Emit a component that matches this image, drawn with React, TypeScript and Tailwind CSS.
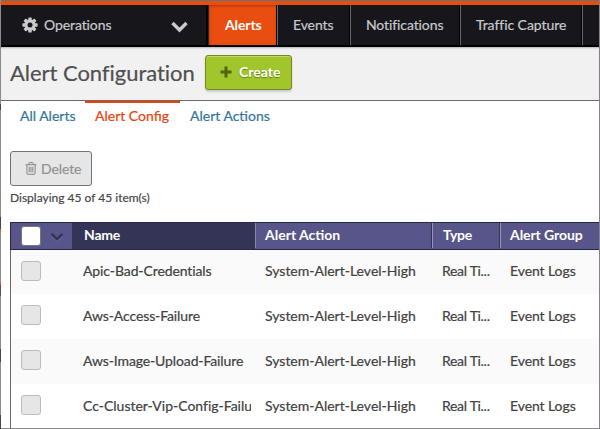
import React from "react";

const nav = [
  { label: "Events", cell: "w-[73px] pl-[15px]", text: "tracking-[-0.1px]" },
  { label: "Notifications", cell: "w-[110px] pl-[15px]", text: "tracking-[-0.1px]" },
  { label: "Traffic Capture", cell: "w-[122px] pl-[15px]", text: "tracking-[-0.05px]" },
];

const rows = [
  { name: "Apic-Bad-Credentials", height: "h-[44px] pb-[2px]", text: "tracking-[-0.1px]", shift: "" },
  { name: "Aws-Access-Failure", height: "h-[45px] pb-[3px]", text: "tracking-[-0.11px]", shift: "pt-[2px]" },
  { name: "Aws-Image-Upload-Failure", height: "h-[45px] pb-[3px]", text: "tracking-[-0.12px]", shift: "pt-[2px]" },
  { name: "Cc-Cluster-Vip-Config-Failure", height: "h-[44px] pb-[2px]", text: "tracking-[-0.01px]", shift: "pt-[2px]" },
];

function Gear() {
  return (
    <svg width="16" height="16" viewBox="0 0 16 16" fill="#c9c9ce">
      {[0, 45, 90, 135].map((a) => (
        <rect key={a} x="6.3" y="0.4" width="3.4" height="15.2" rx="0.6" transform={`rotate(${a} 8 8)`} />
      ))}
      <circle cx="8" cy="8" r="5.7" />
      <circle cx="8" cy="8" r="2.5" fill="#17171b" />
    </svg>
  );
}

function Trash() {
  return (
    <svg width="12" height="13" viewBox="0 0 12 13" fill="none" stroke="#858585" strokeWidth="1">
      <path d="M0.5 2.7H11.5M3.8 2.5V1.3Q3.8 .6 4.5 .6H7.5Q8.2 .6 8.2 1.3V2.5M1.9 3V11.3Q1.9 12.3 2.9 12.3H9.1Q10.1 12.3 10.1 11.3V3M4.2 4.8V10.3M6 4.8V10.3M7.8 4.8V10.3" />
    </svg>
  );
}

export default function App() {
  return (
    <div className="flex h-[429px] w-[600px] overflow-hidden bg-white font-['Lato',sans-serif] text-[14px] leading-[20px] whitespace-nowrap text-[#414141] [-webkit-text-stroke:0.2px]">
      <div className="flex w-px shrink-0 flex-col bg-[#8c8c8e]">
        <div className="h-[104px]" />
        <div className="h-[6px] bg-[#474747]" />
        <div className="h-[107px]" />
        <div className="h-[12px] bg-[#484650]" />
        <div className="h-[3px] bg-[#e8581c]" />
        <div className="h-[50px]" />
        <div className="h-[3px] bg-[#e8581c]" />
        <div className="h-[11px] bg-[#55535f]" />
        <div className="h-[53px]" />
        <div className="h-[13px] bg-[#484650]" />
        <div className="h-[53px]" />
        <div className="grow bg-[#484650]" />
      </div>
      <div className="flex w-[598px] flex-col border-t border-b border-t-[#66727c] border-b-[#858385]">
        <div className="h-[4px] shrink-0 bg-[#e94e0f]" />
        <nav className="flex h-[42px] shrink-0 border-b-2 border-black bg-[#17171b] text-[#c9c9ce]">
          <div className="flex w-[207px] items-center border-r-2 border-black pr-[18px] pl-[21px]">
            <Gear />
            <span className="ml-[6px] grow tracking-[-0.1px]">Operations</span>
            <svg className="mt-[3px]" width="17" height="12" viewBox="0 0 17 12" fill="none" stroke="#c9c9ce" strokeWidth="3.4">
              <path d="M1.5 2L8.5 9L15.5 2" />
            </svg>
          </div>
          <div className="w-px bg-[#25282c]" />
          <div className="flex w-[68px] items-center bg-[#ea4d10] pl-[16px] font-bold text-white shadow-[inset_0_1px_3px_rgba(120,30,0,0.5)] [-webkit-text-stroke:0px]">
            <span className="tracking-[-0.1px]">Alerts</span>
          </div>
          {nav.map((n) => (
            <div key={n.label} className={`flex items-center border-l border-[#68686a] shadow-[-1px_0_0_#000] ${n.cell}`}>
              <span className={n.text}>{n.label}</span>
            </div>
          ))}
          <div className="grow border-l border-[#68686a] shadow-[-1px_0_0_#000]" />
        </nav>
        <header className="flex h-[54px] shrink-0 border-b border-[#6b6a6c] bg-[#f1f1f1] pt-[8px] pl-[9px] shadow-[inset_0_2px_2px_-1px_rgba(0,0,0,0.25)]">
          <h1 className="w-[195px] pt-[4px] text-[22px] leading-[28px] tracking-[-0.04px] text-[#505050]">Alert Configuration</h1>
          <button className="flex h-[35px] w-[87px] items-center rounded-[3px] border border-[#71891f] bg-[#a1c62c] pl-[14px] font-bold text-white shadow-[inset_0_1px_0_#bfdc62,0_2px_2px_rgba(0,0,0,0.15)] [-webkit-text-stroke:0px]">
            <svg className="mb-[2px]" width="12" height="12" viewBox="0 0 12 12">
              <path d="M6 .5V11.5M.5 6H11.5" stroke="#506411" strokeWidth="3" />
            </svg>
            <span className="mb-[2px] ml-[7px] [text-shadow:0_1px_1px_rgba(60,80,0,0.6)]">Create</span>
          </button>
        </header>
        <div className="flex h-[34px] shrink-0 pl-[19px] text-[#337599]">
          <span className="w-[65px] pt-[5px]">All Alerts</span>
          <span className="h-[30px] w-[95px] border-t-2 border-[#ec4209] pt-[3px] pl-[10px] text-[#ec4209]">Alert Config</span>
          <span className="pt-[5px] pl-[10px]">Alert Actions</span>
        </div>
        <div className="shrink-0 pt-[16px] pl-[9px]">
          <button className="flex h-[35px] w-[82px] items-center rounded-[3px] border border-[#737373] bg-[#e6e6e6] pl-[14px] text-[#929292]">
            <Trash />
            <span className="ml-[4px] tracking-[-0.1px]">Delete</span>
          </button>
          <div className="h-[36px] pt-[2px] text-[12px] text-[#484848]">Displaying 45 of 45 item(s)</div>
        </div>
        <div className="ml-[9px] flex min-h-0 grow flex-col">
          <div className="flex h-[28px] shrink-0 border-y border-l border-[#28274b] bg-[#57558a] font-bold text-white [-webkit-text-stroke:0px]">
            <div className="flex w-[61px] items-center pl-[10px]">
              <span className="h-[20px] w-[20px] rounded-[3px] border border-[#77777c] bg-white" />
              <svg className="mt-[2px] ml-[9px]" width="14" height="10" viewBox="0 0 14 10" fill="none">
                <path d="M1.5 3L7 8.2L12.5 3" stroke="#8180a6" strokeWidth="2.4" />
                <path d="M1.5 2L7 7.2L12.5 2" stroke="#343256" strokeWidth="2.6" />
              </svg>
            </div>
            <div className="flex w-[183px] items-center bg-[#343456] pb-[2px] pl-[12px]"><span className="tracking-[-0.2px]">Name</span></div>
            <div className="mb-px flex w-[177px] items-center border-l border-[#8886aa] pb-px pl-[9px]"><span>Alert Action</span></div>
            <div className="mb-px flex w-[68px] items-center border-l border-[#9896b8] pb-px pl-[10px] shadow-[-1px_0_0_#343256]"><span className="tracking-[-0.3px]">Type</span></div>
            <div className="mb-px flex items-center border-l border-[#9896b8] pb-px pl-[9px] shadow-[-1px_0_0_#343256]"><span className="tracking-[-0.08px]">Alert Group</span></div>
          </div>
          <div className="border-l border-[#69696b]">
            {rows.map((r) => (
              <div key={r.name} className={`flex items-center odd:bg-[#fafafa] ${r.height}`}>
                <span className="ml-[10px] h-[20px] w-[20px] shrink-0 rounded-[3px] border border-[#bcbcbc] bg-[#e6e6e6]" />
                <div className={`ml-[42px] flex ${r.shift}`}>
                  <span className={`w-[168px] overflow-hidden ${r.text}`}>{r.name}</span>
                  <span className="ml-[14px] w-[177px]">System-Alert-Level-High</span>
                  <span className="w-[68px] tracking-[-0.3px]">Real Ti...</span>
                  <span className="tracking-[-0.08px]">Event Logs</span>
                </div>
              </div>
            ))}
          </div>
        </div>
      </div>
      <div className="w-px shrink-0 bg-[#858385]" />
    </div>
  );
}
